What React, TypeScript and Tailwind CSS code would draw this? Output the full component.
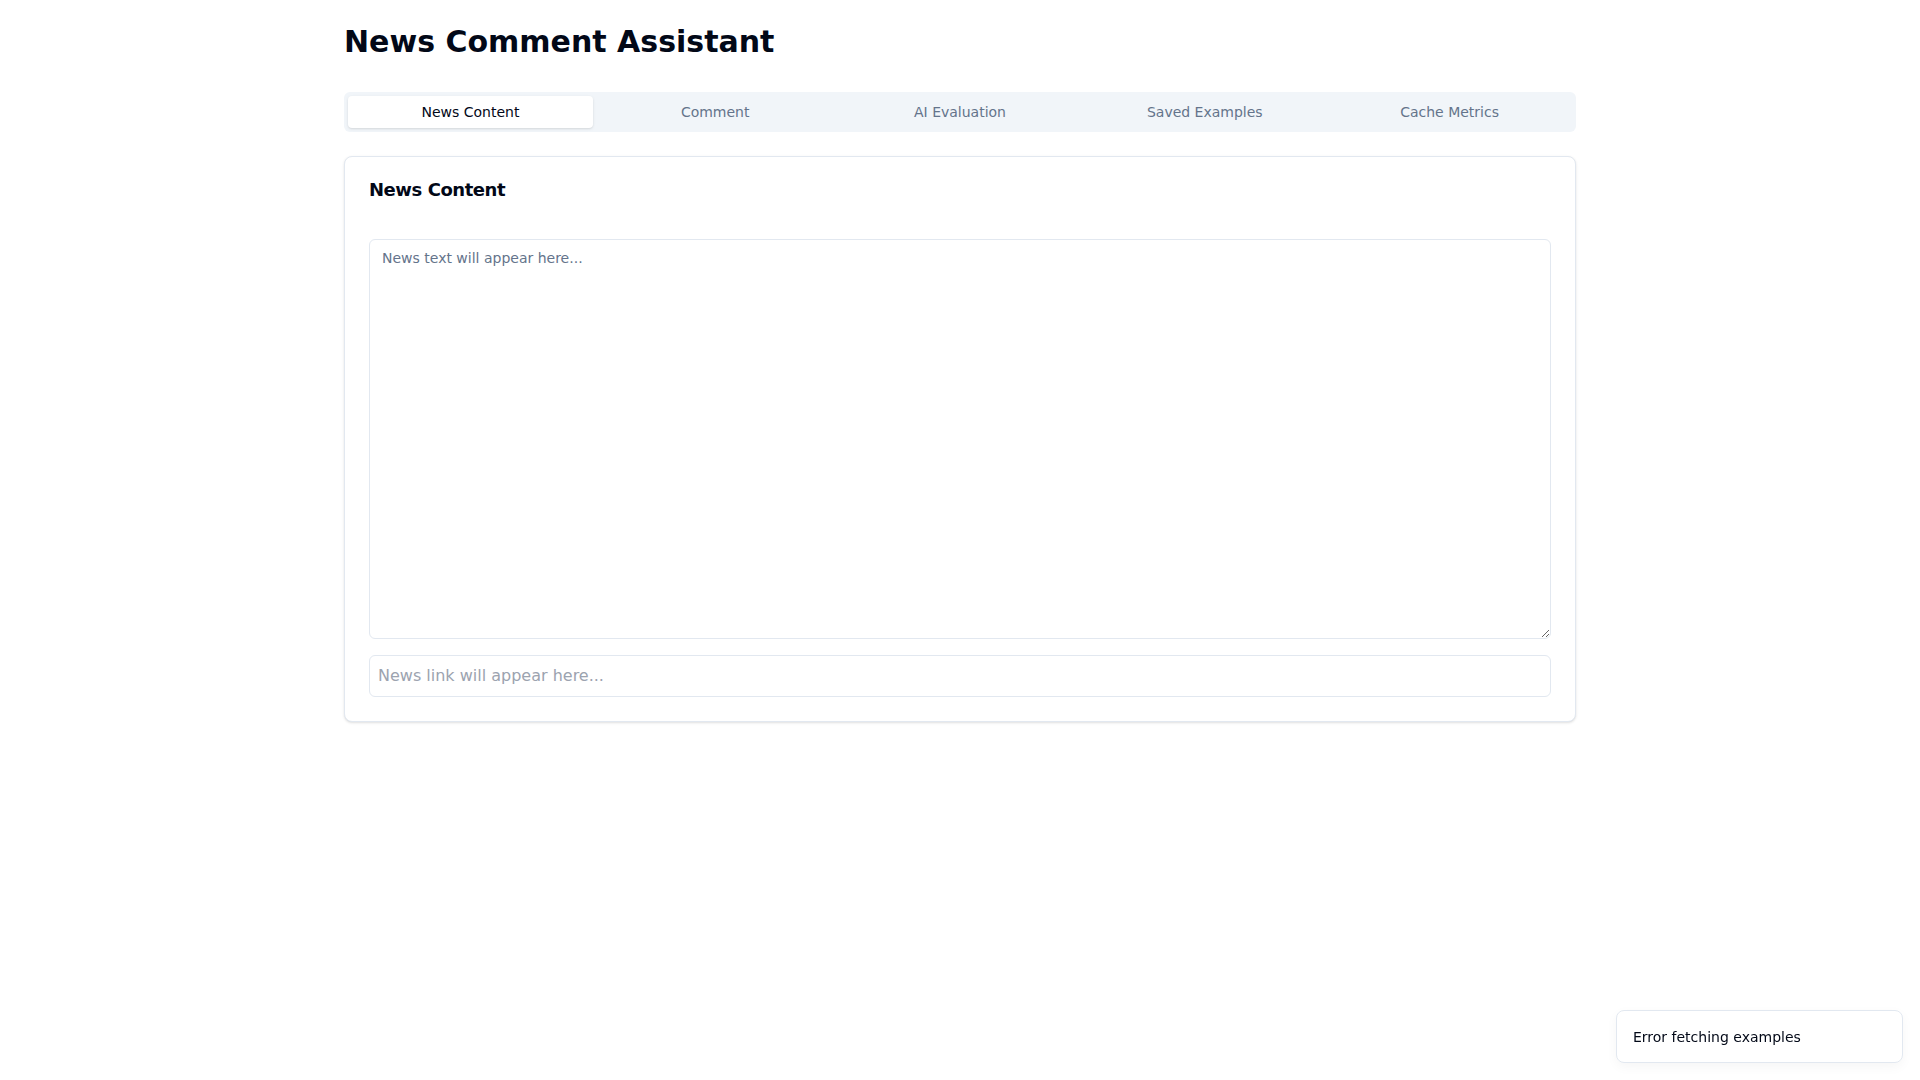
import { useState } from 'react';

const TABS = ['News Content', 'Comment', 'AI Evaluation', 'Saved Examples', 'Cache Metrics'];

export default function App() {
    const [activeTab, setActiveTab] = useState(0);

    return (
        <div className="min-h-screen bg-white font-['DejaVu_Sans',sans-serif] text-[#020817]">
            <div className="mx-auto max-w-7xl px-6 py-6">
                <h1 className="text-3xl font-bold">News Comment Assistant</h1>

                {/* Tabs */}
                <div className="mt-8 grid h-10 grid-cols-5 items-center rounded-md bg-[#f1f5f9] p-1 text-[#64748b]">
                    {TABS.map((tab, index) => (
                        <button
                            key={tab}
                            type="button"
                            onClick={() => setActiveTab(index)}
                            className={`flex h-8 items-center justify-center rounded-sm px-3 text-sm ${index === activeTab
                                ? 'bg-white text-[#020817] shadow-sm'
                                : ''
                                }`}
                        >
                            {tab}
                        </button>
                    ))}
                </div>

                {/* Card */}
                <div className="mt-6 rounded-lg border border-[#e2e8f0] bg-white shadow-sm">
                    <div className="p-6">
                        <h3 className="text-lg font-semibold leading-none tracking-tight">News Content</h3>
                    </div>
                    <div className="space-y-4 px-6 pb-6 pt-4">
                        <textarea
                            readOnly
                            placeholder="News text will appear here..."
                            className="block h-[400px] w-full rounded-md border border-[#e2e8f0] bg-white px-3 py-2 text-sm outline-none placeholder:text-[#64748b]"
                        />
                        <input
                            readOnly
                            placeholder="News link will appear here..."
                            className="block w-full rounded-md border border-[#e2e8f0] px-2 py-2 text-base outline-none placeholder:text-[#9ca3af]"
                        />
                    </div>
                </div>
            </div>

            {/* Toast */}
            <div className="fixed bottom-[17px] right-[17px] flex h-[53px] w-[287px] items-center rounded-lg border border-[#e2e8f0] bg-white px-4 text-sm text-[#020817] shadow-[0_4px_12px_rgba(0,0,0,0.04)]">
                Error fetching examples
            </div>
        </div>
    );
}
